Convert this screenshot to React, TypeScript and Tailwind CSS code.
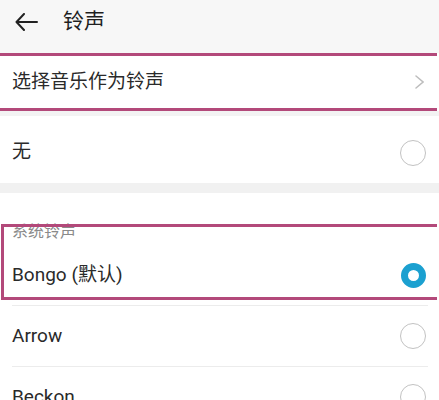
import React from 'react';

const FONT = { fontFamily: 'Roboto, "Noto Sans CJK SC", "Noto Sans", sans-serif' };

const Radio = ({ checked }: { checked?: boolean }) =>
  checked ? (
    <span className="w-[25px] h-[25px] rounded-full border-[7px] border-[#1ba0d0] bg-white" />
  ) : (
    <span className="w-[26px] h-[26px] rounded-full border-[1.5px] border-[#c2c2c2] bg-white" />
  );

const RINGTONES = [
  { name: 'Bongo (默认)', checked: true },
  { name: 'Arrow' },
  { name: 'Beckon' },
];

export default function App() {
  return (
    <div className="relative w-[439px] h-[400px] overflow-hidden bg-[#f3f3f3] text-[#2a2a2a]" style={FONT}>
      <header className="h-[53px] bg-[#f7f7f7] flex items-start">
        <div className="h-[44px] flex items-center pl-[15px]">
          <svg width="23" height="18" viewBox="0 0 23 18" fill="none" stroke="#222" strokeWidth="2" strokeLinecap="round" strokeLinejoin="round">
            <path d="M22 9H2M9 1L1.5 9L9 17" />
          </svg>
          <h1 className="ml-[25px] text-[21px] text-[#1f1f1f]">铃声</h1>
        </div>
      </header>

      <div className="h-[58px] bg-white flex items-center justify-between pl-3 pr-[15px]">
        <span className="text-[19px]">选择音乐作为铃声</span>
        <svg width="9" height="14" viewBox="0 0 9 14" fill="none" stroke="#bdbdbd" strokeWidth="1.5" strokeLinecap="round">
          <path d="M1 1l7 6-7 6" />
        </svg>
      </div>

      <div className="h-[5px]" />

      <div className="h-[67px] bg-white flex items-center justify-between pl-3 pr-[13px] pt-[6px]">
        <span className="text-[19px]">无</span>
        <Radio />
      </div>

      <div className="h-[10px] bg-[#f1f1f1]" />

      <section className="bg-white">
        <div className="h-[52px] flex items-end pl-3 pb-[5px]">
          <span className="text-[16px] leading-[16px] text-[#8a8a8a]">系统铃声</span>
        </div>
        {RINGTONES.map((r) => (
          <div key={r.name}>
            <div className="h-[60px] flex items-center justify-between pl-3 pr-[13px]">
              <span className="text-[19px]">{r.name}</span>
              <Radio checked={r.checked} />
            </div>
            <div className="h-px bg-[#ececec] ml-3 mr-[11px]" />
          </div>
        ))}
      </section>

      {/* annotation frames */}
      <div className="absolute top-[53px] left-0 w-[437px] h-[58px] border-y-[3px] border-[#b3497a]" />
      <div className="absolute top-[224px] left-[1px] w-[436px] h-[76px] border-y-[3px] border-l-[3px] border-[#b3497a]" />
    </div>
  );
}
